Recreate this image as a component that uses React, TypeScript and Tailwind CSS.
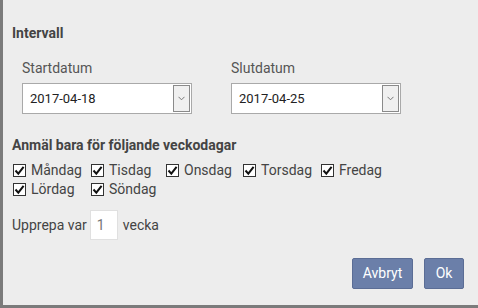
import React from "react";

function Check({ label, w }: { label: string; w: string }) {
    return (
        <label className={`flex items-center gap-[5px] ${w}`}>
            <span className="w-[13px] h-[13px] bg-white border border-[#333] flex items-center justify-center">
                <svg width="11" height="11" viewBox="0 0 11 11">
                    <path d="M1.5 5.5 L4.3 8.6 L9.6 1.8" fill="none" stroke="#111" strokeWidth="2" />
                </svg>
            </span>
            <span className="text-[14px] text-[#444]">{label}</span>
        </label>
    );
}

function DateSelect({ label, value }: { label: string; value: string }) {
    return (
        <div className="flex flex-col w-[170px]">
            <div className="text-[14px] text-[#555] leading-[16px] h-[16px]">{label}</div>
            <div className="mt-[7px] h-[31px] bg-white border border-[#a9a9a9] flex items-center justify-between pl-[7px] pr-[1px]">
                <span className="text-[13px] text-[#222]">{value}</span>
                <span className="w-[17px] h-[27px] border border-[#8a8a8a] bg-[#f0f0f0] flex items-center justify-center">
                    <svg width="7" height="5" viewBox="0 0 7 5">
                        <path d="M0.5 0.8 L3.5 3.8 L6.5 0.8" fill="none" stroke="#777" strokeWidth="1" />
                    </svg>
                </span>
            </div>
        </div>
    );
}

export default function App() {
    return (
        <div className="w-[478px] h-[308px] bg-[#ededed] border-l-[3px] border-b-[3px] border-[#7b7b7b] flex flex-col pl-[9px] font-['Roboto',sans-serif]">
            <div className="mt-[25px] text-[14px] font-bold text-[#444] leading-[16px]">Intervall</div>
            <div className="mt-[19px] ml-[10px] flex gap-[39px]">
                <DateSelect label="Startdatum" value="2017-04-18" />
                <DateSelect label="Slutdatum" value="2017-04-25" />
            </div>
            <div className="mt-[23px] text-[14px] font-bold text-[#444] leading-[16px]">Anmäl bara för följande veckodagar</div>
            <div className="mt-[8px] ml-[1px] flex flex-col">
                <div className="flex h-[19px]">
                    <Check label="Måndag" w="w-[78px]" />
                    <Check label="Tisdag" w="w-[75px]" />
                    <Check label="Onsdag" w="w-[77px]" />
                    <Check label="Torsdag" w="w-[78px]" />
                    <Check label="Fredag" w="w-[78px]" />
                </div>
                <div className="flex h-[19px]">
                    <Check label="Lördag" w="w-[78px]" />
                    <Check label="Söndag" w="w-[78px]" />
                </div>
            </div>
            <div className="mt-[11px] flex items-center h-[30px] text-[14px] text-[#444]">
                <span>Upprepa var</span>
                <span className="ml-[3px] w-[28px] h-[30px] bg-white border border-[#e0e0e0] flex items-center pl-[6px] text-[#777]">1</span>
                <span className="ml-[5px]">vecka</span>
            </div>
            <div className="mt-[18px] flex justify-end gap-[11px] pr-[14px]">
                <button className="w-[61px] h-[31px] bg-[#6b7fa9] border border-[#5b6d95] rounded-[2px] text-white text-[14px]">Avbryt</button>
                <button className="w-[40px] h-[31px] bg-[#6b7fa9] border border-[#5b6d95] rounded-[2px] text-white text-[14px]">Ok</button>
            </div>
        </div>
    );
}
